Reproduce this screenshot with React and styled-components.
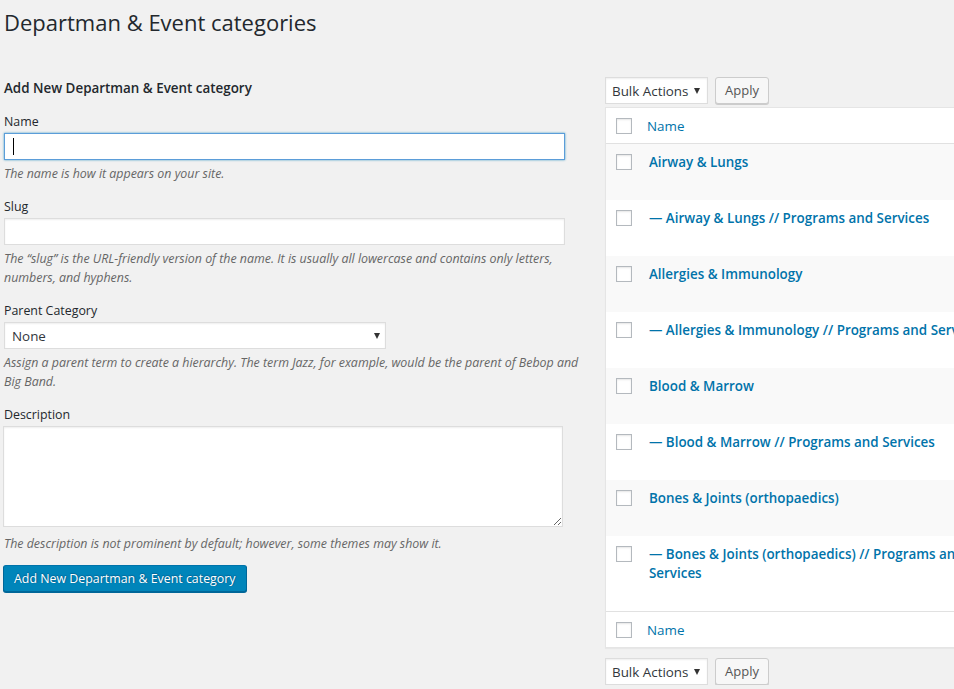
import React from 'react';
import styled, { createGlobalStyle } from 'styled-components';

const GlobalStyle = createGlobalStyle`
  html, body {
    margin: 0;
    padding: 0;
    overflow: hidden;
    background: #f1f1f1;
  }
  body {
    font-family: "Open Sans", "Noto Sans", "Liberation Sans", sans-serif;
    font-size: 12.4px;
    color: #444;
  }
  * {
    box-sizing: border-box;
  }
`;

const Page = styled.div`
  padding: 0 0 0 4px;
  width: 1200px;
`;

const Title = styled.h1`
  margin: 0;
  padding: 8px 0 0;
  font-size: 22px;
  font-weight: 400;
  line-height: 29px;
  color: #23282d;
`;

const Columns = styled.div`
  display: flex;
  align-items: flex-start;
  margin-top: 35px;
`;

const FormCol = styled.div`
  width: 590px;
  flex-shrink: 0;
  padding-top: 6px;
`;

const ListCol = styled.div`
  width: 420px;
  margin-left: 11px;
  padding-top: 5px;
`;

const FormTitle = styled.h2`
  margin: 0 0 14px;
  font-size: 13.4px;
  font-weight: 600;
  line-height: 20px;
  color: #23282d;
`;

const Field = styled.div`
  display: flex;
  flex-direction: column;
  align-items: flex-start;
  margin-bottom: 14px;
`;

const Label = styled.label`
  line-height: 19px;
  margin-bottom: 2px;
  color: #23282d;
`;

const InputWrap = styled.div`
  position: relative;
  width: 95%;
`;

const TextInput = styled.input`
  display: block;
  width: 100%;
  height: 27px;
  margin: 0;
  padding: 3px 5px;
  font: inherit;
  background: #fff;
  border: 1px solid ${(p) => (p.$focused ? '#5b9dd9' : '#ddd')};
  box-shadow: ${(p) =>
    p.$focused ? '0 0 2px rgba(30, 140, 190, 0.8)' : 'inset 0 1px 2px rgba(0, 0, 0, 0.07)'};
  outline: none;
`;

const Caret = styled.span`
  position: absolute;
  left: 9px;
  top: 5px;
  width: 1px;
  height: 17px;
  background: #000;
`;

const SelectWrap = styled.div`
  position: relative;
  width: ${(p) => p.$width}px;

  &::after {
    content: '';
    position: absolute;
    right: ${(p) => p.$arrowRight}px;
    top: 11px;
    border-left: 3px solid transparent;
    border-right: 3px solid transparent;
    border-top: 6px solid #333;
    pointer-events: none;
  }
`;

const Select = styled.select`
  display: block;
  width: 100%;
  height: 27px;
  margin: 0;
  padding: 2px ${(p) => p.$padLeft}px;
  font: inherit;
  font-size: 13.4px;
  color: #32373c;
  background: #fff;
  border: 1px solid #ddd;
  box-shadow: inset 0 1px 2px rgba(0, 0, 0, 0.07);
  border-radius: 0;
  appearance: none;
  outline: none;
`;

const TextArea = styled.textarea`
  display: block;
  width: 560px;
  height: 101px;
  margin: 0 0 0 -1px;
  padding: 4px 6px;
  font: inherit;
  background: #fff;
  border: 1px solid #ddd;
  box-shadow: inset 0 1px 2px rgba(0, 0, 0, 0.07);
  outline: none;
`;

const Help = styled.p`
  margin: ${(p) => p.$top || 4}px 0 0;
  font-style: italic;
  line-height: 19px;
  color: #666;
`;

const PrimaryButton = styled.button`
  height: 27px;
  margin: -2px 0 0 -1px;
  padding: 0 10px 1px;
  font: inherit;
  color: #fff;
  background: #0085ba;
  border: 1px solid #0073aa;
  border-color: #0073aa #006799 #006799;
  border-radius: 3px;
  box-shadow: 0 1px 0 #006799;
  text-shadow: 0 -1px 1px #006799, 1px 0 1px #006799;
  cursor: pointer;
`;

const BulkBar = styled.div`
  display: flex;
  align-items: center;
  gap: 7px;
  margin: ${(p) => p.$margin};
`;

const SecondaryButton = styled.button`
  height: 27px;
  width: 54px;
  padding: 0 0 1px;
  font: inherit;
  font-size: 13px;
  color: #555;
  background: #f7f7f7;
  border: 1px solid #ccc;
  border-radius: 3px;
  box-shadow: 0 1px 0 #ccc;
  cursor: pointer;
`;

const Table = styled.div`
  background: #fff;
  border: 1px solid #e5e5e5;
  border-right: none;
  box-shadow: 0 1px 1px rgba(0, 0, 0, 0.04);
`;

const Row = styled.div`
  display: flex;
  align-items: flex-start;
  background: ${(p) => p.$bg};
  border-top: ${(p) => (p.$topLine ? '1px solid #e1e1e1' : 'none')};
  border-bottom: ${(p) => (p.$bottomLine ? '1px solid #e1e1e1' : 'none')};
`;

const CheckCell = styled.div`
  width: 36px;
  flex-shrink: 0;
  padding: ${(p) => p.$top}px 0 0 10px;
`;

const Check = styled.input.attrs({ type: 'checkbox' })`
  display: block;
  width: 16px;
  height: 16px;
  margin: 0;
  appearance: none;
  background: #fff;
  border: 1px solid #b4b9be;
  box-shadow: inset 0 1px 2px rgba(0, 0, 0, 0.1);
`;

const HeadName = styled.a`
  padding: 8px 0 7px 5px;
  font-size: 13.4px;
  line-height: 20px;
  color: #0073aa;
  text-decoration: none;
`;

const TermCell = styled.div`
  padding: 9px 10px 28px 7px;
  font-size: 13.4px;
  font-weight: 600;
  line-height: 19px;
  white-space: nowrap;
`;

const TermLink = styled.a`
  color: #0073aa;
  text-decoration: none;
`;

const terms = [
  ['Airway & Lungs'],
  ['— Airway & Lungs // Programs and Services'],
  ['Allergies & Immunology'],
  ['— Allergies & Immunology // Programs and Services'],
  ['Blood & Marrow'],
  ['— Blood & Marrow // Programs and Services'],
  ['Bones & Joints (orthopaedics)'],
  ['— Bones & Joints (orthopaedics) // Programs and', 'Services'],
];

function BulkActions({ margin }) {
  return (
    <BulkBar $margin={margin}>
      <SelectWrap $width={103} $arrowRight={8}>
        <Select $padLeft={6} defaultValue="bulk">
          <option value="bulk">Bulk Actions</option>
          <option value="delete">Delete</option>
        </Select>
      </SelectWrap>
      <SecondaryButton type="button">Apply</SecondaryButton>
    </BulkBar>
  );
}

export default function App() {
  return (
    <Page>
      <GlobalStyle />
      <Title>Departman &amp; Event categories</Title>
      <Columns>
        <FormCol>
          <FormTitle>Add New Departman &amp; Event category</FormTitle>

          <Field>
            <Label>Name</Label>
            <InputWrap>
              <TextInput $focused type="text" />
              <Caret />
            </InputWrap>
            <Help>The name is how it appears on your site.</Help>
          </Field>

          <Field>
            <Label>Slug</Label>
            <InputWrap>
              <TextInput type="text" />
            </InputWrap>
            <Help>
              The “slug” is the URL-friendly version of the name. It is usually all lowercase and
              contains only letters, numbers, and hyphens.
            </Help>
          </Field>

          <Field>
            <Label>Parent Category</Label>
            <SelectWrap $width={382} $arrowRight={6}>
              <Select $padLeft={7} defaultValue="none">
                <option value="none">None</option>
              </Select>
            </SelectWrap>
            <Help>
              Assign a parent term to create a hierarchy. The term Jazz, for example, would be the
              parent of Bebop and Big Band.
            </Help>
          </Field>

          <Field>
            <Label>Description</Label>
            <TextArea />
            <Help $top={7}>The description is not prominent by default; however, some themes may show it.</Help>
          </Field>

          <PrimaryButton type="button">Add New Departman &amp; Event category</PrimaryButton>
        </FormCol>

        <ListCol>
          <BulkActions margin="0 0 3px" />
          <Table>
            <Row $bg="#fff" $bottomLine>
              <CheckCell $top={10}>
                <Check />
              </CheckCell>
              <HeadName href="#">Name</HeadName>
            </Row>
            {terms.map((lines, i) => (
              <Row key={lines[0]} $bg={i % 2 === 0 ? '#f9f9f9' : '#fff'}>
                <CheckCell $top={10}>
                  <Check />
                </CheckCell>
                <TermCell>
                  <TermLink href="#">
                    {lines.map((line, j) => (
                      <React.Fragment key={line}>
                        {j > 0 && <br />}
                        {line}
                      </React.Fragment>
                    ))}
                  </TermLink>
                </TermCell>
              </Row>
            ))}
            <Row $bg="#fff" $topLine>
              <CheckCell $top={10}>
                <Check />
              </CheckCell>
              <HeadName href="#">Name</HeadName>
            </Row>
          </Table>
          <BulkActions margin="10px 0 0" />
        </ListCol>
      </Columns>
    </Page>
  );
}
